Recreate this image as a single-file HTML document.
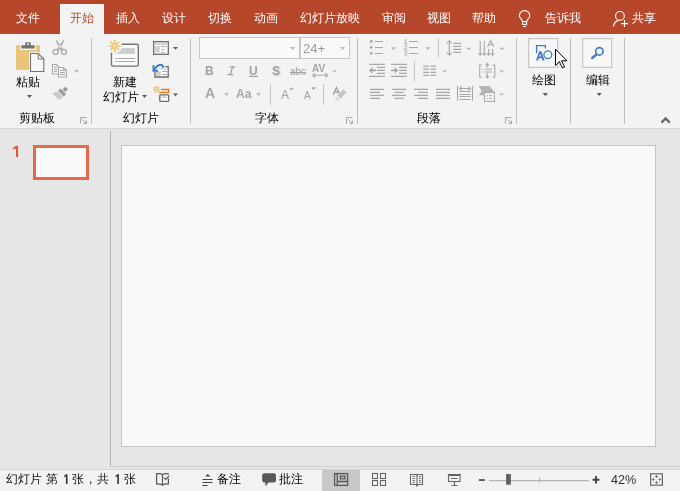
<!DOCTYPE html>
<html><head><meta charset="utf-8">
<style>
html,body{margin:0;padding:0;}
body{width:680px;height:491px;overflow:hidden;position:relative;background:#E6E6E6;font-family:"Liberation Sans",sans-serif;}
.a{position:absolute;white-space:nowrap;}
.t{position:absolute;white-space:nowrap;font-size:12px;line-height:12px;font-weight:500;}
.tab{color:#fff;top:12px;}
.lbl{color:#000;}
svg{position:absolute;left:0;top:0;}
.t,.g{z-index:2;will-change:transform;}
</style></head><body>
<!-- tab bar -->
<div class="a" style="left:0;top:0;width:680px;height:34px;background:#B7472A"></div>
<div class="a" style="left:60px;top:4px;width:44px;height:30px;background:#F3F3F3"></div>
<div class="t tab" style="left:16px">文件</div>
<div class="t tab" style="left:70px;color:#B7472A">开始</div>
<div class="t tab" style="left:116px">插入</div>
<div class="t tab" style="left:162px">设计</div>
<div class="t tab" style="left:208px">切换</div>
<div class="t tab" style="left:254px">动画</div>
<div class="t tab" style="left:300px">幻灯片放映</div>
<div class="t tab" style="left:382px">审阅</div>
<div class="t tab" style="left:427px">视图</div>
<div class="t tab" style="left:472px">帮助</div>
<div class="t tab" style="left:545px">告诉我</div>
<div class="t tab" style="left:632px">共享</div>
<!-- ribbon -->
<div class="a" style="left:0;top:34px;width:680px;height:94px;background:#F3F3F3"></div>
<div class="a" style="left:0;top:128px;width:680px;height:1px;background:#D5D5D5"></div>
<!-- content -->
<div class="a" style="left:110px;top:131px;width:1px;height:336px;background:#B4B4B4"></div>
<div class="a" style="left:113px;top:466px;width:567px;height:1px;background:#CFCFCF"></div>
<div class="a" style="left:121px;top:145px;width:533px;height:300px;border:1px solid #C6C6C6;background:#F9F9F9"></div>
<div class="a" style="left:33px;top:145px;width:50px;height:29px;border:3px solid #E8694A;background:#F9F9F9"></div>

<!-- status -->
<div class="a" style="left:0;top:469px;width:680px;height:1px;background:#D4D4D4"></div>
<div class="a" style="left:0;top:470px;width:680px;height:21px;background:#F3F3F3"></div>
<div class="a" style="left:322px;top:470px;width:38px;height:21px;background:#C8C8C8"></div>
<div class="t" style="left:6px;top:473px;color:#111">幻灯片</div>
<div class="t" style="left:46px;top:473px;color:#111">第</div>

<div class="t" style="left:72px;top:473px;color:#111">张</div>
<div class="t" style="left:89px;top:473px;color:#111">,</div>
<div class="t" style="left:97px;top:473px;color:#111">共</div>

<div class="t" style="left:124px;top:473px;color:#111">张</div>
<div class="t" style="left:217px;top:473px;color:#000">备注</div>
<div class="t" style="left:279px;top:473px;color:#000">批注</div>
<div class="t" style="left:611px;top:474px;color:#333;font-size:12.6px;line-height:13px">42%</div>
<!-- ribbon labels -->
<div class="t lbl" style="left:16px;top:76px">粘贴</div>
<div class="t lbl" style="left:19px;top:112px">剪贴板</div>
<div class="t lbl" style="left:113px;top:76px">新建</div>
<div class="t lbl" style="left:103px;top:91px">幻灯片</div>
<div class="t lbl" style="left:123px;top:112px">幻灯片</div>
<div class="t lbl" style="left:255px;top:112px">字体</div>
<div class="t lbl" style="left:417px;top:112px">段落</div>
<div class="t lbl" style="left:532px;top:74px">绘图</div>
<div class="t lbl" style="left:586px;top:74px">编辑</div>


<div class="a g" style="left:303px;top:42px;font-size:13px;line-height:13px;color:#9A9A9A">24+</div>
<div class="a g" style="left:205px;top:65px;font-size:12px;line-height:12px;font-weight:bold;color:#A0A0A0">B</div>

<div class="a g" style="left:249px;top:65px;font-size:12px;line-height:12px;font-weight:bold;color:#A0A0A0">U</div>
<div class="a g" style="left:272px;top:65px;font-size:12px;line-height:12px;font-weight:bold;color:#A0A0A0;text-shadow:1px 1px 1px #C8C8C8">S</div>
<div class="a g" style="left:290px;top:67px;font-size:10px;line-height:10px;color:#A0A0A0;text-decoration:line-through">abc</div>
<div class="a g" style="left:312px;top:64px;font-size:10px;line-height:10px;font-weight:bold;color:#A6A6A6">AV</div>
<div class="a g" style="left:205px;top:86px;font-size:14px;line-height:14px;font-weight:bold;color:#A6A6A6">A</div>
<div class="a g" style="left:236px;top:88px;font-size:12px;line-height:12px;font-weight:bold;color:#A6A6A6">Aa</div>
<div class="a g" style="left:281px;top:89px;font-size:12px;line-height:12px;color:#A2A2A2">A</div>
<div class="a g" style="left:304px;top:91px;font-size:10px;line-height:10px;color:#A2A2A2">A</div>


<svg width="680" height="491" viewBox="0 0 680 491">
<!-- separators -->
<g fill="#BCBCBC">
<rect x="91" y="38" width="1" height="86"/>
<rect x="190" y="38" width="1" height="86"/>
<rect x="357" y="38" width="1" height="86"/>
<rect x="516" y="38" width="1" height="86"/>
<rect x="570" y="38" width="1" height="86"/>
<rect x="624" y="38" width="1" height="86"/>
</g>
<!-- launchers -->
<g fill="none" stroke="#A8A8A8" stroke-width="1">
<path d="M80.5 123.5V117.5H86.5"/><path d="M82.5 119.5L86.5 123.5M86.5 120.5V123.5H83.5"/>
<path d="M346.5 123.5V117.5H352.5"/><path d="M348.5 119.5L352.5 123.5M352.5 120.5V123.5H349.5"/>
<path d="M505.5 123.5V117.5H511.5"/><path d="M507.5 119.5L511.5 123.5M511.5 120.5V123.5H508.5"/>
</g>
<!-- paste -->
<rect x="16" y="45" width="24" height="25" rx="1.2" fill="#EAC47A"/>
<rect x="20" y="44" width="16" height="6" fill="#F3F3F3"/>
<path d="M21.2 46.2Q21.2 45.3 22.2 45.3H25.2V42.9Q25.2 42.2 25.9 42.2H30.1Q30.8 42.2 30.8 42.9V45.3H33.8Q34.8 45.3 34.8 46.2V48.6H21.2Z" fill="#737373"/>
<rect x="27" y="43.4" width="2" height="1.5" fill="#F3F3F3"/>
<path d="M29 52H38.6L45.3 58.5V73H29Z" fill="#F3F3F3"/>
<path d="M30.5 53.5H38.2L43.8 59V71.5H30.5Z" fill="#F8F8F8" stroke="#737373" stroke-width="1.1"/>
<path d="M38.2 53.5V59H43.8" fill="none" stroke="#737373" stroke-width="1"/>
<!-- dropdown arrow paste -->
<path d="M27 95H32L29.5 98Z" fill="#5A5A5A"/>
<!-- scissors -->
<path d="M55.4 40.6L56.6 40.2L63.2 49.4L61 50.6ZM64.4 40.6L63.2 40.2L56.6 49.4L58.8 50.6Z" fill="#A8A8A8"/>
<g stroke="#A8A8A8" fill="none" stroke-width="1.3">
<circle cx="55.6" cy="51.9" r="2.5"/>
<circle cx="63.9" cy="51.9" r="2.5"/>
</g>
<!-- copy -->
<g stroke="#A8A8A8" stroke-width="1.1" fill="#F7F7F7">
<path d="M52.5 64.5H56.5L58.5 66.5V74H52.5Z"/>
<path d="M58.5 67.5H63.5L66.5 70.5V77H58.5Z"/>
</g>
<g stroke="#A8A8A8" stroke-width="1" fill="none">
<path d="M54 67.5H57M54 69.5H57M54 71.5H57"/>
<path d="M60 70.5H63M60 72.5H65M60 74.5H65"/>
<path d="M63.5 67.5V70.5H66.5"/>
</g>
<path d="M74 70H79L76.5 72.8Z" fill="#B8B8B8"/>
<!-- painter -->
<path d="M62.7 89.4L65.4 86.6L68.0 89.2L65.2 91.9Z" fill="#9C9C9C"/>
<path d="M58.0 90.9L60.5 88.4L66.2 94.1L63.7 96.6Z" fill="#9C9C9C"/>
<path d="M57.4 91.5L63.1 97.2L58.6 99.8L52.2 93.3Z" fill="#CACACA"/>
<!-- new slide -->
<path d="M117 44.3H136.8Q138.3 44.3 138.3 45.8V64.6Q138.3 66.1 136.8 66.1H113Q111.5 66.1 111.5 64.6V52" fill="#FAFAFA" stroke="#737373" stroke-width="1.4"/>
<rect x="115" y="48" width="20" height="5.8" fill="#CDCDCD"/>
<path d="M115 58.5H117.5M118.2 58.5H134.8M115 61.5H117.5M118.2 61.5H134.8" stroke="#A8A8A8" stroke-width="1"/>
<circle cx="114.7" cy="46" r="7.4" fill="#F3F3F3"/>
<g stroke="#EEC46A" stroke-width="1.6">
<path d="M114.7 40.1V51.9M108.8 46H120.6M110.5 41.8L118.9 50.2M118.9 41.8L110.5 50.2"/>
</g>
<circle cx="114.7" cy="46" r="2.6" fill="#EEC46A"/>
<circle cx="114.7" cy="46" r="1.3" fill="#F3F3F3"/>
<path d="M142 95H147L144.5 98Z" fill="#5A5A5A"/>
<!-- layout -->
<rect x="153.7" y="41.7" width="14.6" height="12.6" fill="#FFFFFF" stroke="#6A6A6A" stroke-width="1.3"/>
<rect x="155.2" y="43.1" width="11.6" height="1.9" fill="#CFCFCF"/>
<rect x="155.2" y="46.1" width="4.5" height="6.4" fill="#CFCFCF"/>
<path d="M161 46.5H166.8M161 49.5H164.6M161 52.3H165" stroke="#A8A8A8" stroke-width="0.9"/>
<path d="M173 47H178L175.5 49.8Z" fill="#5A5A5A"/>
<!-- reset -->
<rect x="154.9" y="67" width="13.4" height="10" fill="#FFFFFF"/>
<path d="M165.2 66.6H168.2V77H154.9V71.8" fill="none" stroke="#6A6A6A" stroke-width="1.3"/>
<rect x="159.2" y="68.2" width="7.7" height="1.4" fill="#CFCFCF"/>
<rect x="156" y="71.2" width="4.8" height="4.6" fill="#CFCFCF"/>
<path d="M162.1 71.5H166.9M162.1 74.5H166.9" stroke="#A8A8A8" stroke-width="1"/>
<path d="M163.4 67.8C162.6 63.8 157.6 63.4 154.4 69.8" fill="none" stroke="#3B7DC6" stroke-width="2"/>
<path d="M153.5 65.3V70.8H158.1" fill="none" stroke="#3B7DC6" stroke-width="2"/>
<!-- section -->
<g stroke="#EFBE68" stroke-width="1.1" stroke-linecap="round">
<path d="M156.5 86.2V87.6M156.5 91.2V92.6M153.3 89.4H154.7M158.3 89.4H159.7M154.2 87.1L155.1 88M157.9 90.8L158.8 91.7M158.8 87.1L157.9 88M155.1 90.8L154.2 91.7"/>
</g>
<circle cx="156.5" cy="89.4" r="1.4" fill="none" stroke="#EFBE68" stroke-width="1"/>
<path d="M161.1 89.5H168.7V92.3H159.2" fill="none" stroke="#E8761E" stroke-width="1.3"/>
<rect x="159.8" y="94.9" width="8.9" height="6.4" rx="0.6" fill="#FFFFFF" stroke="#6A6A6A" stroke-width="1.3"/>
<rect x="161.3" y="96.4" width="5.4" height="1.5" fill="#C8C8C8"/>
<path d="M173 93.6H178L175.5 96.2Z" fill="#5A5A5A"/>

<!-- tab icons -->
<g fill="none" stroke="#FFFFFF" stroke-width="1.1">
<path d="M522.6 21.6C522.6 19.6 519.4 18.6 519.4 15.8A5.2 5.2 0 0 1 529.8 15.8C529.8 18.6 526.6 19.6 526.6 21.6"/>
<rect x="522.6" y="21.6" width="4" height="2.8"/>
<path d="M523.2 26.5H526"/>
<circle cx="619.9" cy="15.9" r="4.4"/>
<path d="M613.4 26.8C613.8 23 616 21 618.6 20.6"/>
<path d="M621 23.6H628M624.5 20.1V27.1"/>
</g>
<!-- font boxes -->
<rect x="199.5" y="37.5" width="100" height="21" fill="#F9F9F9" stroke="#C6C6C6" stroke-width="1"/>
<rect x="300.5" y="37.5" width="49" height="21" fill="#F9F9F9" stroke="#C6C6C6" stroke-width="1"/>
<path d="M290 47H295.2L292.6 50Z" fill="#B8B8B8"/>
<path d="M340 47H345.2L342.6 50Z" fill="#B8B8B8"/>
<g fill="#B5B5B5">
<path d="M332 70.4H337L334.5 72.6Z"/>
<path d="M224 93.3H229L226.5 95.8Z"/>
<path d="M256 93.3H261L258.5 95.8Z"/>
<path d="M391 47.3H396L393.5 50Z"/>
<path d="M425.3 47.3H430.3L427.8 50Z"/>
<path d="M466.3 47.8H471.3L468.8 50.2Z"/>
<path d="M499.3 47.8H504.3L501.8 50.2Z"/>
<path d="M442.2 70.6H447.2L444.7 72.8Z"/>
<path d="M499.2 70.4H504.2L501.7 72.6Z"/>
<path d="M499 93.5H504L501.5 95.7Z"/>
</g>
<!-- small separators -->
<g fill="#C6C6C6">
<rect x="270" y="84" width="1" height="21"/>
<rect x="323" y="84" width="1" height="21"/>
<rect x="438" y="38" width="1" height="20"/>
<rect x="414" y="61" width="1" height="21"/>
</g>
<!-- underline -->
<rect x="249" y="75.8" width="9" height="1.2" fill="#A0A0A0"/>
<!-- A grow/shrink carets -->
<path d="M289 89.6H294L291.5 87.2Z" fill="#A8A8A8"/>
<path d="M311 87.3H316.2L313.6 90Z" fill="#A8A8A8"/>
<!-- clear formatting eraser -->
<path d="M333.2 94.8L336.4 87.4L339.2 93.4M334.6 92.1H338.2" fill="none" stroke="#9A9A9A" stroke-width="1.2"/>
<path d="M343.5 89.3L346.5 92.6L340.4 98.7L337.2 95Z" fill="#C6C6C6" stroke="#F3F3F3" stroke-width="0.8" paint-order="stroke"/>
<path d="M336.2 96.4L339.3 99.7L337.9 101.1L334.8 97.8Z" fill="#D0D0D0"/>
<!-- italic I -->
<path d="M229.6 66.9H235.2M227.6 74.6H233.2M232.6 66.9L230.2 74.6" stroke="#A0A0A0" stroke-width="1.3" fill="none"/>
<!-- AV arrow -->
<path d="M312.8 75.3H327.6M315.2 73.1L312.8 75.3L315.2 77.5M325.2 73.1L327.6 75.3L325.2 77.5" stroke="#A8A8A8" stroke-width="1.1" fill="none"/>
<!-- bullets -->
<g fill="#A8A8A8">
<circle cx="371.2" cy="41.4" r="1.4"/><circle cx="371.2" cy="47.3" r="1.4"/><circle cx="371.2" cy="53.3" r="1.4"/>
</g>
<g stroke="#A8A8A8" stroke-width="1.2">
<path d="M375 41.5H383M375 47.5H383M375 53.5H383"/>
<path d="M409 41.5H418M409 47.5H418M409 53.5H418"/>
</g>
<g stroke="#A8A8A8" stroke-width="0.9" fill="none">
<path d="M404.5 40.3L405.8 39.4V43.6M404.2 43.6H407.2"/>
<path d="M404.3 46Q405.5 44.8 406.6 45.6Q407.2 46.5 406.1 47.5L404.3 49.3H407.3"/>
<path d="M404.2 51.2H406.9L405.3 52.9Q407.2 52.9 407.1 54.2Q406.8 55.5 404.2 55.1"/>
</g>
<!-- indent -->
<g stroke="#A8A8A8" stroke-width="1.2" fill="none">
<path d="M369 64.4H385M377 67.3H385M377 70.4H385M377 73.3H385M369 76.4H385"/>
<path d="M391 64.4H407M399 67.3H407M399 70.4H407M399 73.3H407M391 76.4H407"/>
</g>
<g fill="#A8A8A8">
<path d="M369 70.4L372.5 67V69.5H376.2V71.3H372.5V73.8Z"/>
<path d="M398.2 70.4L394.7 67V69.5H391V71.3H394.7V73.8Z"/>
</g>
<!-- columns -->
<g stroke="#A8A8A8" stroke-width="1.2">
<path d="M423.2 66.1H428.8M423.2 69.1H428.8M423.2 72.4H428.8M423.2 75.4H428.8"/>
<path d="M430.4 66.1H436M430.4 69.1H436M430.4 72.4H436M430.4 75.4H436"/>
</g>
<!-- align -->
<g stroke="#A8A8A8" stroke-width="1.2">
<path d="M370 89.3H384M370 92.4H380M370 95.3H384M370 98.4H380"/>
<path d="M392 89.3H406M394.4 92.4H403.8M392 95.3H406M394.4 98.4H403.8"/>
<path d="M414 89.3H428M418 92.4H428M414 95.3H428M418 98.4H428"/>
<path d="M436 89.3H450M436 92.4H450M436 95.3H450M436 98.4H450"/>
</g>
<!-- line spacing -->
<g stroke="#A8A8A8" stroke-width="1.2" fill="none">
<path d="M449.3 41.5V54.5"/>
<path d="M446.8 43.3L449.3 40.8L451.8 43.3M446.8 52.7L449.3 55.2L451.8 52.7"/>
<path d="M453.4 43.4H461.1M453.4 46.3H461.1M453.4 49.4H461.1M453.4 52.3H461.1"/>
</g>
<!-- text direction -->
<g stroke="#A8A8A8" stroke-width="1.1" fill="none">
<path d="M480.2 41V55M484.3 41V55M488.6 49V55M492.6 49V55"/>
<path d="M478.6 53.4L480.2 55.2L481.8 53.4M482.7 53.4L484.3 55.2L485.9 53.4M487 53.4L488.6 55.2L490.2 53.4M491 53.4L492.6 55.2L494.2 53.4"/>
<path d="M487.6 46.8L490.7 40.4L493.8 46.8M488.6 44.7H492.8"/>
</g>
<!-- align text -->
<g stroke="#A8A8A8" stroke-width="1.1" fill="none">
<path d="M482 65H479.7V77.2H482M492.5 65H494.8V77.2H492.5"/>
<path d="M487.3 63.5V67.5M485.5 65.3L487.3 63.3L489.1 65.3"/>
<path d="M487.3 73V78M485.5 76L487.3 78L489.1 76"/>
<path d="M482.4 69.3H483.6M485 69.3H492.1M482.4 72H483.6M485 72H492.1"/>
</g>
<!-- distributed -->
<g stroke="#A8A8A8" stroke-width="1.1" fill="none">
<path d="M457.5 86V100.8M472.5 86V100.8"/>
<path d="M459.6 88.5H470.4M461.7 86.4L459.6 88.5L461.7 90.6M468.3 86.4L470.4 88.5L468.3 90.6"/>
<path d="M459.5 91.5H470.5M459.5 94.5H470.5M459.5 96.5H470.5M459.5 99.5H470.5"/>
</g>
<!-- smartart -->
<path d="M478.8 86.1H489.5L494.5 92H484.4V95.3H478.8L481.5 91Z" fill="#B4B4B4"/>
<rect x="484.6" y="92.4" width="9.8" height="9" fill="#F7F7F7" stroke="#A8A8A8" stroke-width="1.1"/>
<path d="M487 95.6H488M489 95.6H492M487 98.3H488M489 98.3H492" stroke="#A8A8A8" stroke-width="1"/>
<!-- drawing / editing boxes -->
<rect x="528.6" y="38.6" width="29" height="28.8" fill="#F7F7F7" stroke="#C6C6C6" stroke-width="1.2"/>
<rect x="582.6" y="38.6" width="29" height="28.8" fill="#F7F7F7" stroke="#C6C6C6" stroke-width="1.2"/>
<g stroke="#3D7CC4" stroke-width="1.3" fill="none">
<path d="M536.6 53.2V45.7H545.4V48.6"/>
<circle cx="547.8" cy="54.7" r="3.9"/>
</g>
<path d="M536 60.5L539.2 51.2H541.4L544.6 60.5H542.5L541.8 58.3H538.8L538.1 60.5ZM539.3 56.6H541.3L540.3 53.4Z" fill="#3D7CC4" fill-rule="evenodd" stroke="#F7F7F7" stroke-width="1" paint-order="stroke"/>
<path d="M544 50.5A4.6 4.6 0 0 1 546 50.6" stroke="#F7F7F7" stroke-width="0"/>
<circle cx="599.4" cy="51.4" r="3.7" fill="none" stroke="#3D7CC4" stroke-width="1.7"/>
<path d="M596.4 54.6L592.2 58" stroke="#3D7CC4" stroke-width="2.4" stroke-linecap="round"/>
<path d="M542.5 93H548L545.25 96Z" fill="#5A5A5A"/>
<path d="M596.7 93H601.7L599.2 96Z" fill="#5A5A5A"/>
<!-- cursor -->
<path d="M555.5 49.2V65.3L559.3 61.6L562.4 68L564.6 67L561.6 60.8H566.9Z" fill="#FFFFFF" stroke="#000000" stroke-width="1"/>
<!-- collapse caret -->
<path d="M661.4 122.6L665.6 118.4L669.8 122.6" fill="none" stroke="#666666" stroke-width="2.2"/>
<!-- status icons -->
<g stroke="#555555" stroke-width="1.2" fill="none">
<path d="M162.5 474.5C160.8 473.6 158.6 473.6 156.6 473.8V484C158.6 483.8 160.8 484 162.5 485V474.5"/>
<path d="M162.5 485C164.2 484 166.4 483.8 168.4 484V478.5M168.4 474.2V473.8C166.4 473.6 164.2 473.6 162.5 474.5"/>
<path d="M164.2 477.6L165.8 479.3L169.3 475.6"/>
<path d="M202.5 479.5H212.6M202.5 482.5H212.6M202.5 485.5H207.5" stroke="#444444" stroke-width="1.1"/>
</g>
<path d="M205.2 476.6H210.4L207.8 474Z" fill="#444444"/>
<path d="M264.2 473.3H274Q276 473.3 276 475.3V480.6Q276 482.6 274 482.6H268.5L265.4 486.5V482.6H264.2Q262.2 482.6 262.2 480.6V475.3Q262.2 473.3 264.2 473.3Z" fill="#595959"/>
<!-- normal view icon -->
<g stroke="#595959" stroke-width="1.3" fill="none">
<rect x="334.6" y="473.6" width="13" height="11.8"/>
<path d="M337.3 473.6V485.4M337.3 481.5H347.6"/>
<rect x="340.4" y="476.2" width="4.6" height="2.6"/>
</g>
<!-- sorter -->
<g stroke="#666666" stroke-width="1.1" fill="none">
<rect x="372.5" y="473.5" width="5" height="5"/><rect x="380.5" y="473.5" width="5" height="5"/>
<rect x="372.5" y="480.5" width="5" height="5"/><rect x="380.5" y="480.5" width="5" height="5"/>
</g>
<!-- reading -->
<g stroke="#666666" stroke-width="1.1" fill="none">
<path d="M410.5 474.5V484.5H416.5V485.5L417 485L417.5 485.5V484.5H422.5V474.5H417.5L417 475L416.5 474.5Z"/>
<path d="M417 475V484.5"/>
<path d="M412.5 476.5H415M412.5 478.5H415M412.5 480.5H415M412.5 482.5H415M419 476.5H421M419 478.5H421M419 480.5H421M419 482.5H421" stroke-width="0.9"/>
</g>
<!-- slideshow -->
<g stroke="#666666" stroke-width="1.1" fill="none">
<path d="M447.8 474.5H461"/>
<rect x="448.5" y="475.5" width="11.5" height="6"/>
<path d="M451 478.5H457.5M454.5 481.5V485.5M451.5 485.5H457.5"/>
</g>
<!-- zoom slider -->
<rect x="478.9" y="479.1" width="5.9" height="1.9" fill="#555555"/>
<rect x="488.9" y="480.2" width="100" height="1" fill="#A6A6A6"/>
<rect x="539" y="477.8" width="1" height="4.8" fill="#A6A6A6"/>
<rect x="506.1" y="474" width="4.8" height="10.7" fill="#606060"/>
<path d="M592.5 479.75H599.4M595.95 476.1V483.4" stroke="#444444" stroke-width="1.9"/>
<!-- fit -->
<g stroke="#666666" stroke-width="1.2" fill="none">
<rect x="650.6" y="473.8" width="11.8" height="11.4"/>
<path d="M656.5 475.5V478M654.9 476.9L656.5 475.3L658.1 476.9M656.5 481V483.5M654.9 482.1L656.5 483.7L658.1 482.1M652.4 479.5H654.6M653.8 477.9L652.2 479.5L653.8 481.1M658.4 479.5H660.6M659.2 477.9L660.8 479.5L659.2 481.1" stroke-width="0.9"/>
</g>

<path d="M16 145.8H18.1V157H16V148.6L13 149.6V148.1Z" fill="#DC5A37"/>
<path d="M65.9 474.2H67.5V484H65.9V476.3L64.1 477.3V475.9ZM117.3 474.2H118.9V484H117.3V476.3L115.5 477.3V475.9Z" fill="#333333"/>
<!--GROUP2-->
</svg>

</body></html>
